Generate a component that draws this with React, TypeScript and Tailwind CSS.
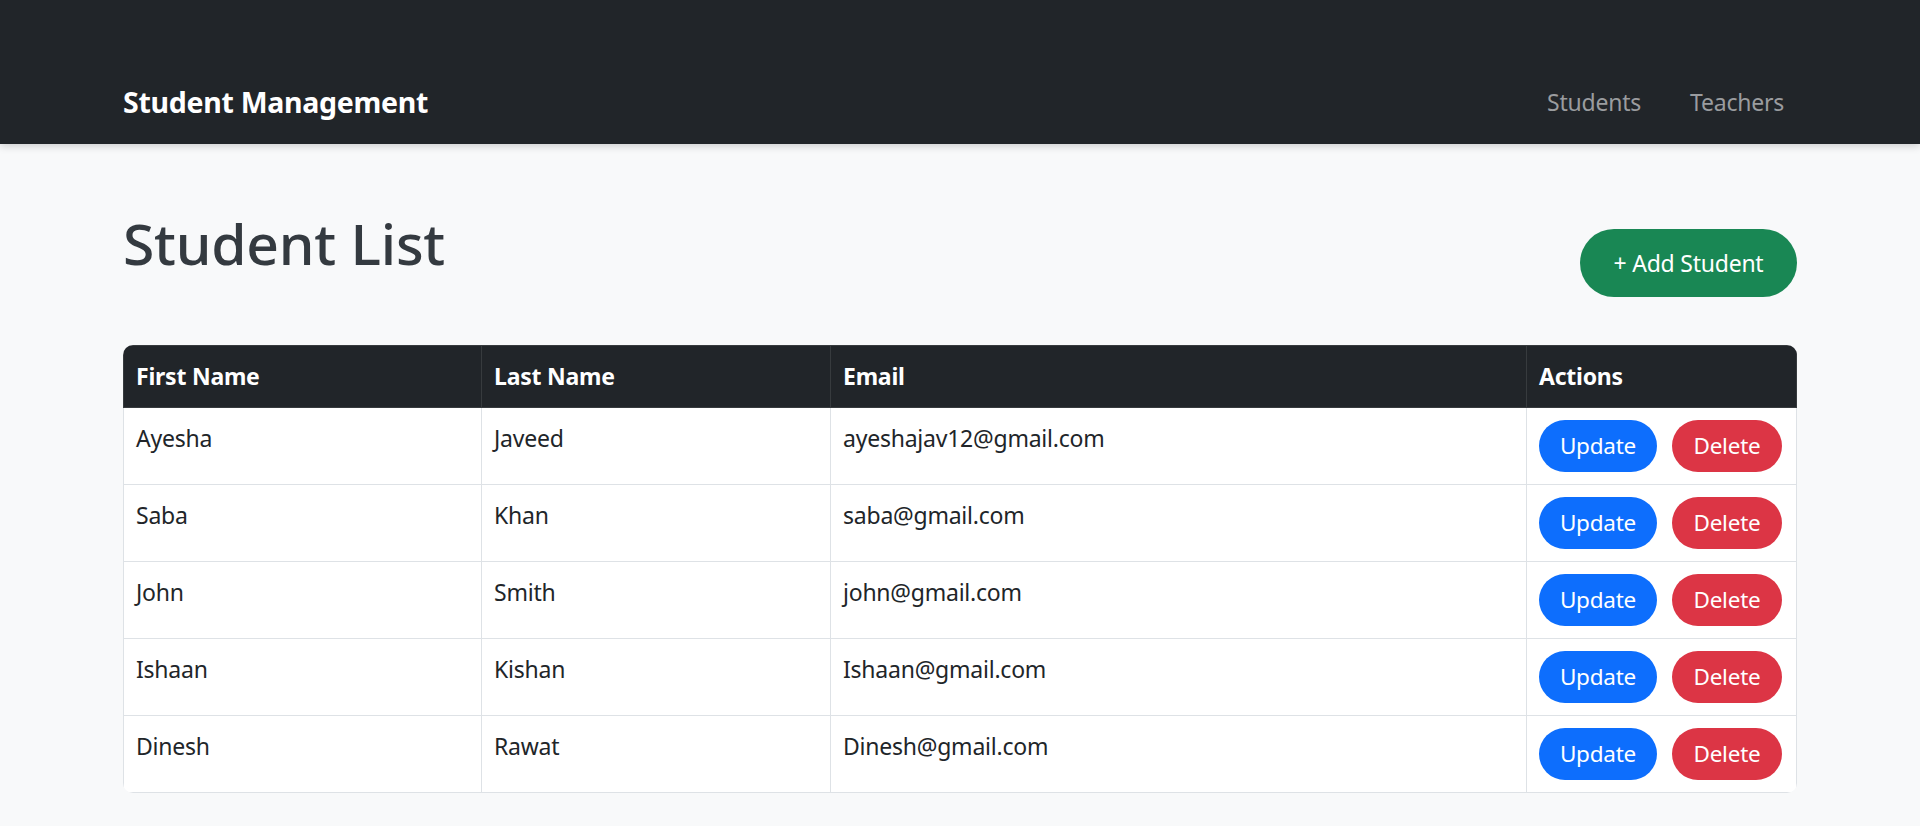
import React from "react";

interface IStudent {
  id: number;
  firstName: string;
  lastName: string;
  email: string;
}

const students: IStudent[] = [
  { id: 1, firstName: "Ayesha", lastName: "Javeed", email: "ayeshajav12@gmail.com" },
  { id: 2, firstName: "Saba", lastName: "Khan", email: "saba@gmail.com" },
  { id: 3, firstName: "John", lastName: "Smith", email: "john@gmail.com" },
  { id: 4, firstName: "Ishaan", lastName: "Kishan", email: "Ishaan@gmail.com" },
  { id: 5, firstName: "Dinesh", lastName: "Rawat", email: "Dinesh@gmail.com" },
];

const Navbar = () => {
  return (
    <nav className="relative z-10 h-[144px] bg-[#212529] pt-[60px] shadow-[0_2px_8px_rgba(0,0,0,0.18)]">
      <div className="flex h-full items-center justify-between px-[123px]">
        <a className="text-[28.5px] font-bold leading-[45px] tracking-[-0.01em] text-white">Student Management</a>
        <ul className="mr-[13px] flex items-center gap-[49px] text-[23px] leading-[36px] text-[#9a9c9f]">
          <li>Students</li>
          <li>Teachers</li>
        </ul>
      </div>
    </nav>
  );
};

const StudentRow = ({ student }: { student: IStudent }) => {
  return (
    <tr className="bg-white">
      <td className="border border-[#dee2e6] px-[12px] py-[12px] align-top leading-[36px]">{student.firstName}</td>
      <td className="border border-[#dee2e6] px-[12px] py-[12px] align-top leading-[36px]">{student.lastName}</td>
      <td className="border border-[#dee2e6] px-[12px] py-[12px] align-top leading-[36px]">{student.email}</td>
      <td className="border border-[#dee2e6] px-[12px] py-[12px] align-top">
        <div className="flex items-center gap-[15px]">
          <button className="h-[52px] w-[118px] rounded-full bg-[#0d6efd] text-[22.5px] text-white">Update</button>
          <button className="h-[52px] w-[110px] rounded-full bg-[#dc3545] text-[22.5px] text-white">Delete</button>
        </div>
      </td>
    </tr>
  );
};

const App = () => {
  return (
    <div className="min-h-[826px] bg-[#f8f9fa] font-['Noto_Sans',sans-serif] text-[23px] tracking-[-0.01em] text-[#212529]">
      <Navbar />
      <main className="px-[123px] pt-[63px]">
        <div className="mb-[48px] flex items-start justify-between">
          <h1 className="h-[90px] text-[57px] font-medium leading-[72px] text-[#343a40]">Student List</h1>
          <button className="mt-[22px] h-[68px] w-[217px] rounded-full bg-[#198754] text-[23px] text-white">
            + Add Student
          </button>
        </div>

        <div className="overflow-hidden rounded-[10px]">
          <table className="w-full border-collapse">
            <thead>
              <tr className="bg-[#212529] text-left text-white">
                <th className="w-[358px] border border-[#373b3e] px-[12px] py-[12px] font-bold leading-[37px]">First Name</th>
                <th className="w-[349px] border border-[#373b3e] px-[12px] py-[12px] font-bold leading-[37px]">Last Name</th>
                <th className="w-[696px] border border-[#373b3e] px-[12px] py-[12px] font-bold leading-[37px]">Email</th>
                <th className="border border-[#373b3e] px-[12px] py-[12px] font-bold leading-[37px]">Actions</th>
              </tr>
            </thead>
            <tbody>
              {students.map((student) => (
                <StudentRow key={student.id} student={student} />
              ))}
            </tbody>
          </table>
        </div>
      </main>
    </div>
  );
};

export default App;
